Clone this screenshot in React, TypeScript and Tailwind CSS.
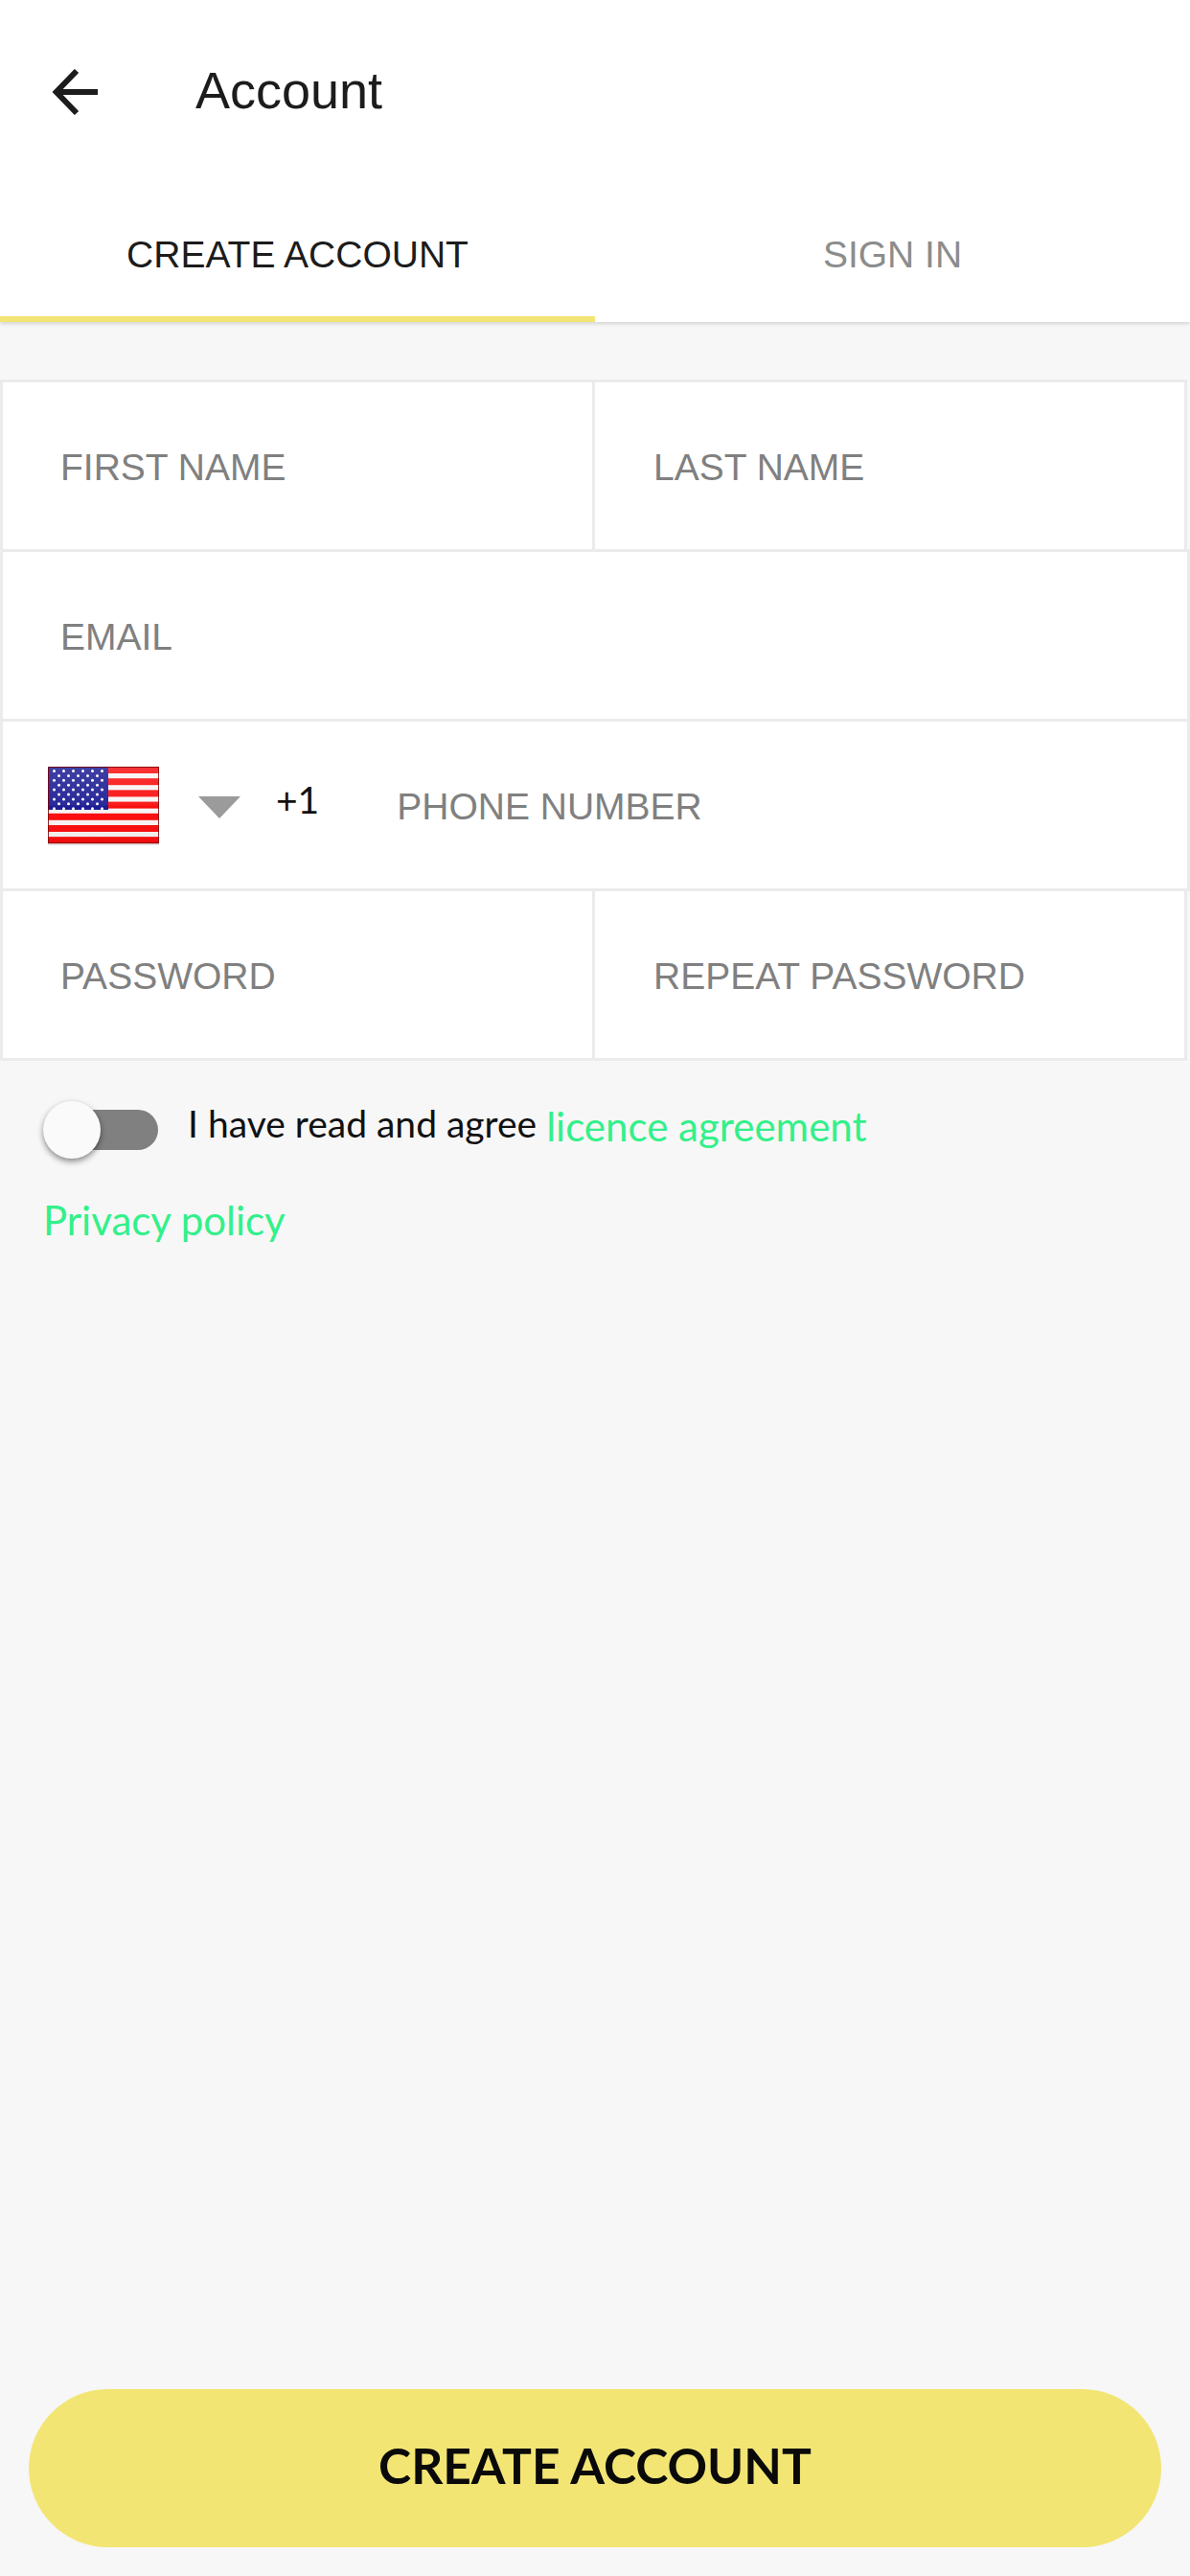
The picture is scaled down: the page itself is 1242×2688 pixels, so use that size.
import { useState } from "react";

const sans = "font-['Liberation_Sans',Arial,sans-serif]";
const lato = "font-['Lato',sans-serif]";

function UsFlag() {
  const stripes = [0, 1, 2, 3, 4, 5, 6].map((i) => i * 12.2);
  const stars: [number, number][] = [];
  for (let row = 0; row < 9; row++) {
    const count = row % 2 === 0 ? 6 : 5;
    for (let col = 0; col < count; col++) {
      stars.push([6.5 + col * 10 + (row % 2 === 0 ? 0 : 5), 4.5 + row * 4.9]);
    }
  }
  return (
    <svg width="116" height="82" viewBox="0 0 116 82" className="shrink-0">
      <defs>
        <linearGradient id="gloss" x1="0" y1="0" x2="0" y2="1">
          <stop offset="0" stopColor="#fff" stopOpacity="0.16" />
          <stop offset="0.5" stopColor="#fff" stopOpacity="0.06" />
          <stop offset="0.52" stopColor="#fff" stopOpacity="0" />
          <stop offset="1" stopColor="#000" stopOpacity="0.05" />
        </linearGradient>
        <filter id="soft">
          <feGaussianBlur stdDeviation="0.6" />
        </filter>
      </defs>
      <g filter="url(#soft)">
        <rect x="0" y="0" width="116" height="80" fill="#f8f4f4" />
        {stripes.map((y) => (
          <rect key={y} x="0" y={y} width="116" height="7" fill="#fb0808" />
        ))}
        <rect x="0" y="0" width="63" height="45" fill="#1c1c94" />
        {stars.map(([x, y]) => (
          <circle key={`${x}-${y}`} cx={x} cy={y} r="1.5" fill="#ffffff" />
        ))}
      </g>
      <rect x="0" y="0" width="116" height="80" fill="url(#gloss)" />
      <rect x="0.5" y="0.5" width="115" height="79" fill="none" stroke="#7a0808" strokeOpacity="0.8" filter="url(#soft)" />
      <rect x="0" y="80" width="116" height="2" fill="#000" opacity="0.1" />
    </svg>
  );
}

function Field({ label, className }: { label: string; className?: string }) {
  return (
    <div className={`flex h-[180px] items-center border-[3px] border-[#ebebeb] bg-white pt-[4px] text-[39px] text-[#808080] ${sans} ${className ?? ""}`}>
      {label}
    </div>
  );
}

export default function App() {
  const [agreed, setAgreed] = useState(false);
  return (
    <div className="flex h-[2688px] w-[1242px] flex-col overflow-hidden bg-[#f7f7f7]">
      <header className={`relative z-10 bg-white shadow-[0_2px_4px_rgba(0,0,0,0.14)] ${sans}`}>
        <div className="flex h-[192px] items-center pl-[54px]">
          <svg width="48" height="48" viewBox="0 0 48 48" fill="none" stroke="#1c1c1c" strokeWidth="6" className="shrink-0">
            <path d="M48 24H6" />
            <path d="M26 2 4.7 24 26 46" />
          </svg>
          <h1 className="ml-[102px] -mt-[3px] text-[54px] font-normal text-[#1c1c1c]">Account</h1>
        </div>
        <div className="flex h-[144px] text-[39px]">
          <div className="flex w-[621px] items-center justify-center border-b-[6px] border-[#f2e574] pt-[10px] text-[#1c1c1c]">CREATE ACCOUNT</div>
          <div className="flex w-[621px] items-center justify-center border-b-[6px] border-transparent pt-[10px] text-[#8c8c8c]">SIGN IN</div>
        </div>
      </header>

      <form className="mt-[60px] flex flex-col">
        <div className="flex w-[1239px]">
          <Field label="FIRST NAME" className="w-[621px] pl-[60px]" />
          <Field label="LAST NAME" className="-ml-[3px] w-[621px] pl-[61px]" />
        </div>
        <Field label="EMAIL" className="-mt-[3px] w-[1242px] pl-[60px]" />
        <div className={`-mt-[3px] flex h-[180px] w-[1242px] items-center border-[3px] border-[#ebebeb] bg-white ${sans}`}>
          <div className="ml-[47px] mt-[2px]"><UsFlag /></div>
          <div className="ml-[41px] mt-[5px] h-0 w-0 border-x-[22.5px] border-t-[23px] border-x-transparent border-t-[#9b9b9b]" />
          <span className={`ml-[37px] -mt-[12px] text-[39px] text-[#111] ${lato}`}>+1</span>
          <span className="ml-[81px] pt-[4px] text-[39px] text-[#808080]">PHONE NUMBER</span>
        </div>
        <div className="-mt-[3px] flex w-[1239px]">
          <Field label="PASSWORD" className="w-[621px] pl-[60px]" />
          <Field label="REPEAT PASSWORD" className="-ml-[3px] w-[621px] pl-[61px]" />
        </div>
      </form>

      <div className={`pl-[45px] ${lato}`}>
        <div className="mt-[42px] flex h-[60px] items-center">
          <button type="button" onClick={() => setAgreed(!agreed)} className="relative h-[60px] w-[120px] shrink-0">
            <span className="absolute left-[10px] right-0 top-[9px] h-[42px] rounded-full bg-[#808080]" />
            <span className="absolute left-0 top-0 h-[60px] w-[60px] rounded-full bg-[#fafafa] shadow-[0_3px_6px_rgba(0,0,0,0.45)]" />
          </button>
          <span className="ml-[31px] -mt-[13px] text-[39px] text-[#111]">I have read and agree</span>
          <span className="ml-[10px] -mt-[8px] text-[42px] text-[#33f08a]">licence agreement</span>
        </div>
        <div className="mt-[33px] text-[42px] text-[#33f08a]">Privacy policy</div>
      </div>

      <div className="mt-auto px-[30px] pb-[30px]">
        <button type="button" className={`flex h-[165px] w-full items-center justify-center rounded-full bg-[#f2e574] pb-[5px] text-[51.5px] font-bold text-[#0a0a0a] ${lato}`}>
          CREATE ACCOUNT
        </button>
      </div>
    </div>
  );
}
